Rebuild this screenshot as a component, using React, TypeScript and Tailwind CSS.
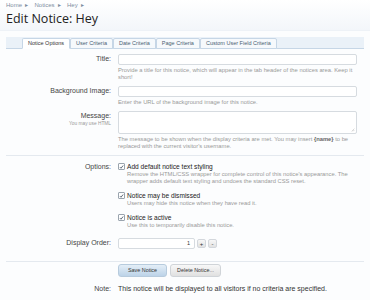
import React from 'react';

const tabs = ['Notice Options', 'User Criteria', 'Date Criteria', 'Page Criteria', 'Custom User Field Criteria'];

function Check() {
  return (
    <span className="mt-[1px] flex h-[7px] w-[7px] shrink-0 items-center justify-center rounded-[1px] border border-[#9aa4ae] bg-white">
      <svg viewBox="0 0 8 8" className="h-[6px] w-[6px]">
        <path d="M1.5 4.2 L3.2 6 L6.6 1.6" fill="none" stroke="#3a4a5c" strokeWidth="1.3" />
      </svg>
    </span>
  );
}

function Row({ label, sub, children }: { label: string; sub?: string; children: React.ReactNode }) {
  return (
    <div className="flex">
      <div className="w-[105px] shrink-0 text-right">
        <div className="text-[7px] leading-[10px] text-[#444]">{label}</div>
        {sub && <div className="text-[4.8px] leading-[5px] text-[#999]">{sub}</div>}
      </div>
      <div className="ml-[7px] w-[239px]">{children}</div>
    </div>
  );
}

function Option({ title, hint }: { title: string; hint: React.ReactNode }) {
  return (
    <div>
      <div className="flex items-start gap-[2px]">
        <Check />
        <span className="text-[6.6px] leading-[9px] font-medium text-[#222]">{title}</span>
      </div>
      <div className="pl-[9px] text-[5.8px] leading-[7px] text-[#999]">{hint}</div>
    </div>
  );
}

export default function App() {
  return (
    <div className="h-[300px] w-[370px] overflow-hidden bg-[#fcfdfe]" style={{ fontFamily: '"Liberation Sans", Arial, sans-serif' }}>
      <div className="bg-gradient-to-b from-white to-[#f3f6fa] px-[6px] pt-[2px] pb-[3px] border-b border-[#eef2f7]">
        <div className="text-[6px] leading-[7px] text-[#7d8ea1] [word-spacing:1.5px]">Home ▸ &nbsp;Notices ▸ &nbsp;Hey ▸</div>
        <h1 className="mt-[2px] text-[12.5px] leading-[16px] text-[#222]" style={{ fontFamily: '"Open Sans", sans-serif' }}>Edit Notice: Hey</h1>
      </div>

      <div className="mx-[6px] mt-[6px] flex h-[12px] items-end border-b border-[#c6d6e6] bg-[#eaf1f8] pl-[16px]">
        {tabs.map((t, i) => (
          <div
            key={t}
            className={`-mb-[1px] flex h-[11px] items-center border border-[#c6d6e6] px-[5px] text-[5.5px] rounded-t-[2px] ${
              i === 0 ? 'border-b-white bg-white text-[#333]' : 'bg-[#f6f9fc] text-[#4a5e73]'
            }`}
          >
            {t}
          </div>
        ))}
      </div>

      <div className="mx-[6px] pt-[5px]">
        <Row label="Title:">
          <div className="h-[11px] rounded-[2px] border border-[#d6dbe0] bg-white" />
          <div className="mt-[2px] text-[5.8px] leading-[7px] text-[#999]">
            Provide a title for this notice, which will appear in the tab header of the notices area. Keep it short!
          </div>
        </Row>
        <div className="h-[5px]" />
        <Row label="Background Image:">
          <div className="h-[11px] rounded-[2px] border border-[#d6dbe0] bg-white" />
          <div className="mt-[2px] text-[5.8px] leading-[7px] text-[#999]">Enter the URL of the background image for this notice.</div>
        </Row>
        <div className="h-[5px]" />
        <Row label="Message:" sub="You may use HTML">
          <div className="relative h-[23px] rounded-[2px] border border-[#d6dbe0] bg-white">
            <svg viewBox="0 0 6 6" className="absolute right-[1px] bottom-[1px] h-[4px] w-[4px]">
              <path d="M1 5 L5 1 M3 5 L5 3" stroke="#aaa" strokeWidth="0.7" />
            </svg>
          </div>
          <div className="mt-[2px] text-[5.8px] leading-[7px] text-[#999]">
            <div className="whitespace-nowrap">
              The message to be shown when the display criteria are met. You may insert{' '}
              <span className="font-bold text-[#666]">{'{name}'}</span> to be
            </div>
            <div>replaced with the current visitor's username.</div>
          </div>
        </Row>

        <div className="mt-[5px] mb-[6px] border-t border-[#e4e9ef]" />

        <Row label="Options:">
          <div className="flex flex-col gap-[6px]">
            <Option
              title="Add default notice text styling"
              hint="Remove the HTML/CSS wrapper for complete control of this notice's appearance. The wrapper adds default text styling and undoes the standard CSS reset."
            />
            <Option title="Notice may be dismissed" hint="Users may hide this notice when they have read it." />
            <Option title="Notice is active" hint="Use this to temporarily disable this notice." />
          </div>
        </Row>

        <div className="h-[9px]" />
        <Row label="Display Order:">
          <div className="flex items-center gap-[2px]">
            <div className="flex h-[11px] w-[77px] items-center justify-end rounded-[2px] border border-[#d6dbe0] bg-white pr-[4px] text-[5.5px] text-[#333]">1</div>
            <div className="flex h-[9px] w-[9px] items-center justify-center rounded-[2px] border border-[#d3d7dc] bg-gradient-to-b from-[#f7f7f7] to-[#e2e2e2] text-[6px] leading-none text-[#333]">+</div>
            <div className="flex h-[9px] w-[9px] items-center justify-center rounded-[2px] border border-[#d3d7dc] bg-gradient-to-b from-[#f7f7f7] to-[#e2e2e2] text-[6px] leading-none text-[#333]">-</div>
          </div>
        </Row>

        <div className="mt-[12px] border-t border-[#e4e9ef]" />

        <div className="mt-[2px] flex gap-[3px] pl-[112px]">
          <div className="flex h-[13px] w-[49px] items-center justify-center rounded-[3px] border border-[#b7cbdd] bg-gradient-to-b from-[#e4eef7] to-[#bcd3e8] text-[5.4px] text-[#333]">Save Notice</div>
          <div className="flex h-[13px] w-[51px] items-center justify-center rounded-[3px] border border-[#d0d4d8] bg-gradient-to-b from-[#f8f8f8] to-[#e0e0e0] text-[5.4px] text-[#333]">Delete Notice...</div>
        </div>

        <div className="mt-[7px]">
          <Row label="Note:">
            <div className="text-[7px] leading-[10px] text-[#333]">This notice will be displayed to all visitors if no criteria are specified.</div>
          </Row>
        </div>
      </div>
    </div>
  );
}
